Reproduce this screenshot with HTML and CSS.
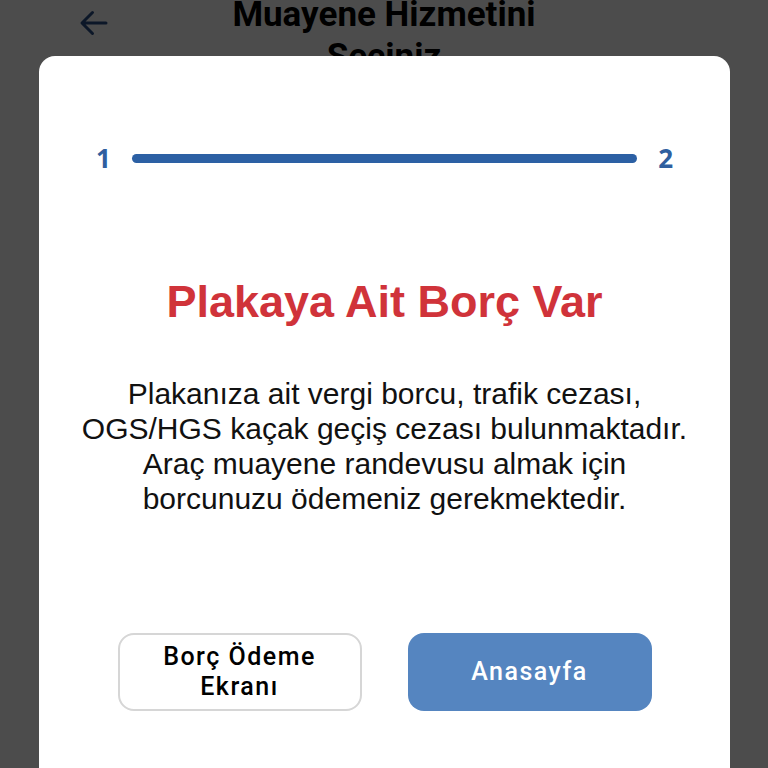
FILE: index.html
```html
<!DOCTYPE html>
<html lang="tr">
<head>
<meta charset="utf-8">
<link rel="stylesheet" href="styles.css">
</head>
<body>
<div class="screen">
  <header class="topbar">
    <svg class="back" viewBox="0 0 24 24" width="36" height="36"><path d="M20 12H5M11 5l-7 7 7 7" fill="none" stroke="currentColor" stroke-width="2" stroke-linecap="round" stroke-linejoin="round"/></svg>
    <h1 class="page-title">Muayene Hizmetini<br>Seçiniz</h1>
    <span></span>
  </header>
  <div class="overlay"></div>
  <div class="modal">
    <div class="stepper">
      <span class="step">1</span>
      <span class="bar"></span>
      <span class="step">2</span>
    </div>
    <h2 class="alert-title">Plakaya Ait Borç Var</h2>
    <p class="message">Plakanıza ait vergi borcu, trafik cezası,<br>OGS/HGS kaçak geçiş cezası bulunmaktadır.<br>Araç muayene randevusu almak için<br>borcunuzu ödemeniz gerekmektedir.</p>
    <div class="actions">
      <button class="btn btn-outline">Borç Ödeme<br>Ekranı</button>
      <button class="btn btn-primary">Anasayfa</button>
    </div>
  </div>
</div>
</body>
</html>
```
FILE: styles.css
```css
* { box-sizing: border-box; }
html, body { margin: 0; padding: 0; }
body { width: 768px; height: 768px; overflow: hidden; background: #fff; font-family: "Liberation Sans", Arial, sans-serif; }
.screen { position: relative; width: 768px; height: 768px; overflow: hidden; }
.topbar { display: grid; grid-template-columns: 1fr auto 1fr; align-items: start; padding: 0 0 0 76px; height: 80px; }
.back { color: #2b4f86; margin-top: 5px; }
.page-title {
  margin: -6px 0 0 0; text-align: center;
  font-family: Roboto, sans-serif; font-weight: 700; font-size: 35px; line-height: 42px;
  color: #000;
  position: relative; left: -38px;
}
.overlay { position: absolute; inset: 0; background: rgba(0,0,0,0.7); }
.modal {
  position: absolute; left: 39px; top: 56px; width: 691px; height: 760px;
  background: #fff; border-radius: 16px;
  display: flex; flex-direction: column; align-items: center;
  padding-top: 87px;
}
.stepper { display: flex; align-items: center; width: 100%; padding: 0 57px 0 57px; gap: 21px; }
.step { font-family: "Open Sans", sans-serif; font-weight: 700; font-size: 26px; color: #2f5f9f; line-height: 30px; }
.bar { flex: 1; height: 9px; border-radius: 5px; background: #2c60a4; }
.alert-title { margin: 103px 0 0; font-size: 45px; font-weight: 700; color: #d0333a; line-height: 52px; }
.message { margin: 48px 0 0; font-size: 30px; line-height: 35px; color: #111; text-align: center; }
.actions { display: flex; gap: 46px; margin-top: 117px; }
.btn {
  width: 244px; height: 78px; border-radius: 16px;
  font-family: Roboto, sans-serif; font-weight: 500; font-size: 25px; line-height: 30px; letter-spacing: 1.5px;
  display: flex; align-items: center; justify-content: center; text-align: center; padding: 0;
}
.btn-outline { background: #fff; border: 2px solid #d6d6d6; color: #000; }
.btn-primary { background: #5585c0; border: none; color: #fff; }
```
